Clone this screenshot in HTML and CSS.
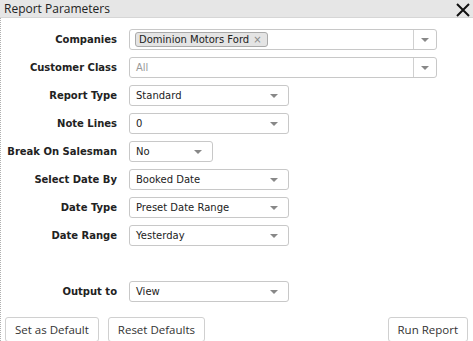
FILE: index.html
```html
<!DOCTYPE html>
<html>
<head>
<meta charset="utf-8">
<link rel="stylesheet" href="styles.css">
</head>
<body>
<div class="dialog">
  <div class="titlebar">
    <span class="title">Report Parameters</span>
    <svg class="close" width="14" height="14" viewBox="0 0 14 14"><path d="M1 1 L13 13 M13 1 L1 13" stroke="#111" stroke-width="2" fill="none"/></svg>
  </div>
  <div class="body">
    <div class="form">
      <label class="lbl">Companies</label>
      <div class="select wide multi">
        <span class="tag">Dominion Motors Ford <span class="x">×</span></span>
        <span class="sep"></span><span class="caret"></span>
      </div>
      <label class="lbl">Customer Class</label>
      <div class="select wide"><span class="val ph">All</span><span class="sep"></span><span class="caret"></span></div>
      <label class="lbl">Report Type</label>
      <div class="select std"><span class="val">Standard</span><span class="caret"></span></div>
      <label class="lbl">Note Lines</label>
      <div class="select std"><span class="val">0</span><span class="caret"></span></div>
      <label class="lbl">Break On Salesman</label>
      <div class="select small"><span class="val">No</span><span class="caret"></span></div>
      <label class="lbl">Select Date By</label>
      <div class="select std"><span class="val">Booked Date</span><span class="caret"></span></div>
      <label class="lbl">Date Type</label>
      <div class="select std"><span class="val">Preset Date Range</span><span class="caret"></span></div>
      <label class="lbl">Date Range</label>
      <div class="select std"><span class="val">Yesterday</span><span class="caret"></span></div>
      <div class="spacer"></div>
      <label class="lbl">Output to</label>
      <div class="select std"><span class="val">View</span><span class="caret"></span></div>
    </div>
    <div class="buttons">
      <button class="btn">Set as Default</button>
      <button class="btn">Reset Defaults</button>
      <span class="grow"></span>
      <button class="btn">Run Report</button>
    </div>
  </div>
</div>
</body>
</html>
```
FILE: styles.css
```css
html, body { margin: 0; padding: 0; background: #fff; }
.dialog { width: 473px; height: 341px; overflow: hidden; position: relative; font-family: "DejaVu Sans", Verdana, sans-serif; }
.titlebar {
  height: 17px; background: #e6e6e6; border-bottom: 1px solid #d6d6d6;
  display: flex; align-items: center; justify-content: space-between;
  padding: 0 3px 0 4px; box-sizing: content-box;
}
.title { font-family: "Open Sans", sans-serif; font-size: 12px; color: #222; }
.close { margin-top: 2px; }
.body { border-left: 1px dotted #b0b0b0; height: 323px; box-sizing: border-box; padding-top: 11px; display: flex; flex-direction: column; }
.form { display: grid; grid-template-columns: 116px auto; column-gap: 12px; row-gap: 7px; align-items: center; justify-items: start; }
.lbl { justify-self: end; font-weight: bold; font-size: 10px; color: #222; white-space: nowrap; }
.spacer { grid-column: 1 / 3; height: 21px; }
.select {
  height: 21px; box-sizing: border-box; border: 1px solid #c8c8c8; border-radius: 3px;
  display: flex; align-items: center; padding-left: 6px; position: relative; background: #fff;
  font-size: 10px; color: #222;
}
.select .val { flex: 1; }
.select .ph { color: #999; }
.wide { width: 308px; }
.std { width: 160px; }
.small { width: 84px; }
.multi { padding-left: 5px; }
.multi .tag { flex: none; margin-right: auto; }
.tag {
  background: #e4e4e4; border: 1px solid #aaa; border-radius: 3px; height: 15px; box-sizing: border-box;
  display: flex; align-items: center; padding: 0 5px 0 3px; font-size: 10px; color: #222;
}
.tag .x { color: #888; margin-left: 4px; font-size: 10px; }
.sep { width: 1px; align-self: stretch; background: #d0d0d0; }
.caret { width: 0; height: 0; border-left: 4px solid transparent; border-right: 4px solid transparent; border-top: 4px solid #888; margin: 0 7px 0 7px; }
.std .caret, .small .caret { margin-right: 10px; }
.buttons { display: flex; align-items: center; margin-top: 15px; padding: 0 5px 0 4px; gap: 9px; }
.grow { flex: 1; }
.btn {
  height: 25px; border: 1px solid #d0d0d0; border-radius: 3px; background: #fff;
  font-family: "Open Sans", sans-serif; font-size: 11.5px; color: #333; padding: 0 9px;
}
```
